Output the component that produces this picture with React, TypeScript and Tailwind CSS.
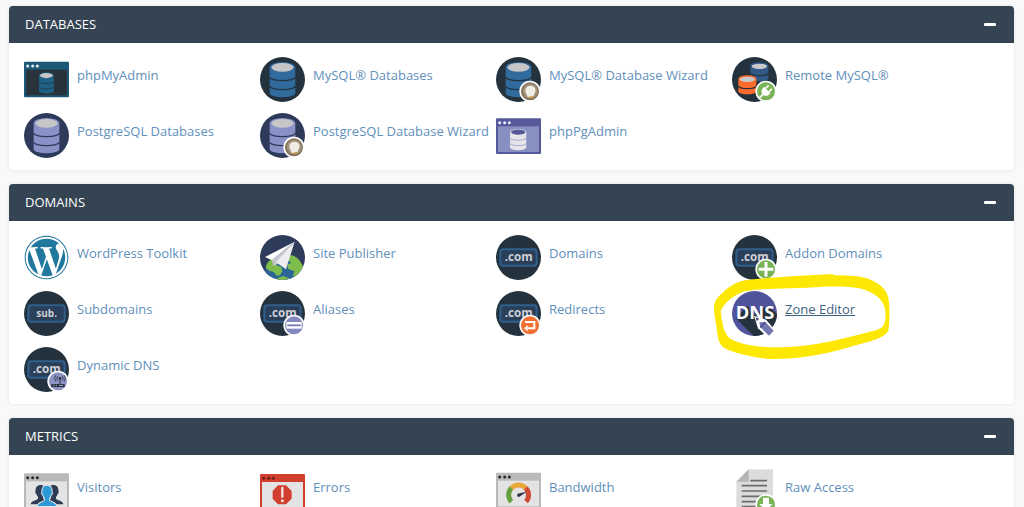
import React, { useState } from 'react';
import { FaWordpress } from 'react-icons/fa';

const NAVY = '#24323e';

// All icons share a 135 x 135 drawing area.
const Icon: React.FC<{ children: React.ReactNode }> = ({ children }) => (
  <svg viewBox="0 0 135 135" className="h-[45px] w-[45px] shrink-0" aria-hidden="true">
    {children}
  </svg>
);

const Disc: React.FC<{ fill?: string }> = ({ fill = NAVY }) => (
  <circle cx="67.5" cy="67.5" r="67.5" fill={fill} />
);

type CylinderProps = { fill: string; line: string; top?: string; transform?: string };

const Cylinder: React.FC<CylinderProps> = ({ fill, line, top = '#c6c6c9', transform }) => (
  <g transform={transform}>
    <path d="M29 31a38.5 16 0 0 1 77 0V108a38.5 13 0 0 1-77 0z" fill={fill} />
    <ellipse cx="67.5" cy="31" rx="33" ry="13" fill={top} />
    <path d="M29 60a38.5 11 0 0 0 77 0M29 87a38.5 11 0 0 0 77 0" fill="none" stroke={line} strokeWidth="3.5" />
  </g>
);

const ShortCylinder: React.FC<CylinderProps> = ({ fill, line, transform }) => (
  <g transform={transform}>
    <path d="M0 10a27 10 0 0 1 54 0V48a27 9 0 0 1-54 0z" fill={fill} />
    <ellipse cx="27" cy="12" rx="23" ry="8" fill="#c9c9cc" />
    <path d="M0 31a27 9 0 0 0 54 0" fill="none" stroke={line} strokeWidth="3.5" />
  </g>
);

const Badge: React.FC<{ fill: string; children: React.ReactNode; cy?: number }> = ({ fill, children, cy = 103 }) => (
  <g transform={`translate(102 ${cy})`}>
    <circle r="32" fill="#fff" />
    <circle r="27" fill={fill} />
    {children}
  </g>
);

const Wand = () => (
  <Badge fill="#857459">
    <circle cx="1" cy="-1" r="22" fill="#a3957d" />
    <path d="M-12 -10C-5 -20 12 -19 16 -7C19 2 11 9 11 14L-7 17C-8 9-18 1-12-10z" fill="#efede6" />
    <path d="M-4 19l14-3" stroke="#d6a64a" strokeWidth="4" />
  </Badge>
);

const Window: React.FC<{ frame: string; inner: string; dot: string; y?: number }> = ({ frame, inner, dot, y = 14 }) => (
  <g transform={`translate(0 ${y})`}>
    <rect width="135" height="107" rx="3" fill={frame} />
    <rect x="6" y="24" width="123" height="77" fill={inner} />
    <circle cx="11" cy="13" r="4.5" fill={dot} />
    <circle cx="26" cy="13" r="4.5" fill={dot} />
    <circle cx="40" cy="13" r="4.5" fill={dot} />
  </g>
);

const DomainPlate: React.FC<{ text: string; size: number }> = ({ text, size }) => (
  <>
    <Disc />
    <rect x="13" y="43" width="109" height="49" rx="8" fill="#2a3f5a" stroke="#315f8b" strokeWidth="6" />
    <text
      x="68"
      y="79"
      textAnchor="middle"
      fontFamily="'Open Sans', sans-serif"
      fontWeight="700"
      fontSize={size}
      fill="#cfd0d6"
    >
      {text}
    </text>
  </>
);

const Person: React.FC<{ fill: string; transform: string }> = ({ fill, transform }) => (
  <path
    transform={transform}
    fill={fill}
    d="M0-24c10 0 16 7 15 17 2 1 2 8-2 9-1 5-4 8-5 10v5c3 5 20 5 22 17H-30c2-12 19-12 22-17v-5c-1-2-4-5-5-10-4-1-4-8-2-9-1-10 5-17 15-17z"
  />
);

const PhpMyAdmin = () => (
  <Icon>
    <Window frame="#1c5877" inner="#28333c" dot="#e6eef2" />
    <Cylinder fill="#1d6285" line="#28333c" transform="translate(28 37) scale(.58 .6)" />
  </Icon>
);

const MySql = () => (
  <Icon>
    <Disc />
    <Cylinder fill="#316a9d" line={NAVY} />
  </Icon>
);

const MySqlWizard = () => (
  <Icon>
    <Disc />
    <Cylinder fill="#316a9d" line={NAVY} />
    <Wand />
  </Icon>
);

const RemoteMySql = () => (
  <Icon>
    <Disc />
    <ShortCylinder fill="#315a88" line={NAVY} transform="translate(55 16)" />
    <ShortCylinder fill="#fb6b2b" line={NAVY} transform="translate(19 55)" />
    <Badge fill="#7ab355">
      <g transform="rotate(45)" fill="#fff" stroke="#fff">
        <path d="M-13-5h26v5a13 13 0 0 1-26 0z" />
        <path d="M-7-5v-13M7-5v-13M0 10v17" strokeWidth="5" fill="none" />
      </g>
    </Badge>
  </Icon>
);

const Postgres = () => (
  <Icon>
    <Disc fill="#2d3a5a" />
    <Cylinder fill="#8a91c7" line="#2d3a5a" />
  </Icon>
);

const PostgresWizard = () => (
  <Icon>
    <Disc fill="#2d3a5a" />
    <Cylinder fill="#8a91c7" line="#2d3a5a" />
    <Wand />
  </Icon>
);

const PhpPgAdmin = () => (
  <Icon>
    <Window frame="#555899" inner="#8890c2" dot="#eef" y={16} />
    <Cylinder fill="#e6e6ea" line="#8890c2" top="#555899" transform="translate(24 39) scale(.63 .6)" />
  </Icon>
);

const WordPress = () => <FaWordpress className="h-[45px] w-[45px] shrink-0 text-[#21789f]" aria-hidden="true" />;

const SitePublisher = () => (
  <Icon>
    <defs>
      <clipPath id="publisher-disc">
        <circle cx="67.5" cy="67.5" r="67.5" />
      </clipPath>
    </defs>
    <Disc fill="#2e3b5b" />
    <g clipPath="url(#publisher-disc)">
      <circle cx="71" cy="114" r="56" fill="#2c6699" />
      <path d="M17 98C20 84 27 76 37 72L50 91 64 96 67 109 60 121 50 122 41 111 28 107z" fill="#7ebd4b" />
      <path d="M80 72L94 60C116 66 127 85 132 105L120 119 109 132 99 121 103 109 84 101 82 89 94 83z" fill="#7ebd4b" />
      <path d="M51 130l19-7 19 8-10 6H57z" fill="#7ebd4b" />
    </g>
    <path d="M104 20L15 66 36 76z" fill="#fff" />
    <path d="M104 20L36 76 40 93 54 86z" fill="#c6c6ce" />
    <path d="M104 20L48 82 78 103z" fill="#ededf1" />
  </Icon>
);

const Domains = () => (
  <Icon>
    <DomainPlate text=".com" size={35} />
  </Icon>
);

const AddonDomains = () => (
  <Icon>
    <DomainPlate text=".com" size={35} />
    <Badge fill="#7ab355">
      <path d="M0-22v44M-22 0h44" stroke="#fff" strokeWidth="9" />
    </Badge>
  </Icon>
);

const Subdomains = () => (
  <Icon>
    <DomainPlate text="sub." size={30} />
  </Icon>
);

const Aliases = () => (
  <Icon>
    <DomainPlate text=".com" size={35} />
    <Badge fill="#8389bd">
      <path d="M-23-10h46v20h-46z" fill="#fff" />
      <path d="M-20 0h40" stroke="#6f75aa" strokeWidth="5" />
    </Badge>
  </Icon>
);

const Redirects = () => (
  <Icon>
    <DomainPlate text=".com" size={35} />
    <Badge fill="#f27034">
      <path d="M-15-10h28v19H-7" fill="none" stroke="#fff" strokeWidth="6" />
      <path d="M-18 9l11-9v18z" fill="#fff" />
    </Badge>
  </Icon>
);

const ZoneEditor = () => (
  <Icon>
    <defs>
      <clipPath id="zone-disc">
        <circle cx="67.5" cy="67.5" r="67.5" />
      </clipPath>
    </defs>
    <Disc fill="#50549a" />
    <path d="M12 82L48 44 60 74 108 44 135 70V135H65z" fill={NAVY} clipPath="url(#zone-disc)" />
    <text
      x="69"
      y="83"
      textAnchor="middle"
      fontFamily="'Open Sans', sans-serif"
      fontWeight="700"
      fontSize="55"
      fill="#fff"
    >
      DNS
    </text>
    <path d="M66 74l36 12 27 31-16 19h-9L78 112z" fill="#fff" />
    <path d="M82 94l18-1 25 26-14 15-26-25z" fill="#7277b0" />
    <path d="M85 109l15-16" stroke="#434783" strokeWidth="4" />
    <path d="M71 79l11 4-8 8z" fill="#43476e" />
  </Icon>
);

const DynamicDns = () => (
  <Icon>
    <DomainPlate text=".com" size={35} />
    <Badge fill="#8d93c5">
      <path d="M-20 8h40v9h-40z" fill={NAVY} />
      <path d="M6-7V8" stroke={NAVY} strokeWidth="3" />
      <circle cx="6" cy="-9" r="4" fill={NAVY} />
      <path d="M-1-16q-5 7 0 14M13-16q5 7 0 14M-7-18q-6 9 0 18M19-18q6 9 0 18" fill="none" stroke={NAVY} strokeWidth="2.5" />
      <path d="M-15 12h4M-7 12h4M3 12h12" stroke="#a9aed8" strokeWidth="3" />
    </Badge>
  </Icon>
);

const Visitors = () => (
  <Icon>
    <Window frame="#b9b9b9" inner="#e3e3e3" dot="#2b2b2b" y={13} />
    <Person fill="#2e3b57" transform="translate(50 72)" />
    <Person fill="#2e3b57" transform="translate(88 72)" />
    <g stroke="#e3e3e3" strokeWidth="3">
      <Person fill="#2b9ad6" transform="translate(69 75) scale(1 1.1)" />
    </g>
  </Icon>
);

const Errors = () => (
  <Icon>
    <Window frame="#d1402f" inner="#e3e3e3" dot="#6d2119" y={15} />
    <path d="M54 49h24l17 17v23l-17 17H54L38 89V66z" fill="#d1402f" />
    <path d="M67 57v26" stroke="#f2e4e2" strokeWidth="7" strokeLinecap="round" />
    <circle cx="67" cy="95" r="4.5" fill="#f2e4e2" />
  </Icon>
);

const Bandwidth = () => (
  <Icon>
    <Window frame="#b9b9b9" inner="#e3e3e3" dot="#2b2b2b" y={11} />
    <path d="M46 98A30 30 0 0 1 46 57" fill="none" stroke="#669f3d" strokeWidth="15" />
    <path d="M46 57A30 30 0 0 1 89 57" fill="none" stroke="#eaa537" strokeWidth="15" />
    <path d="M89 57A30 30 0 0 1 90 98" fill="none" stroke="#d04b35" strokeWidth="15" />
    <path d="M92 68L69 84a6 6 0 0 1-4-10z" fill="#2b3440" />
  </Icon>
);

const RawAccess = () => (
  <Icon>
    <path d="M50 1h73v134H13V38z" fill="#dcdcdc" />
    <path d="M50 1v37H13z" fill="#b5b5b5" />
    <path d="M55 35h50M29 50h76M29 66h76M29 82h76M29 98h76M29 113h76" stroke="#6b6b6b" strokeWidth="5" />
    <Badge fill="#7ab355" cy={107}>
      <path d="M-9-21H9V-2h11L0 19-20-2h11z" fill="#fff" />
    </Badge>
  </Icon>
);

// Hand-drawn marker loop around the highlighted link.
const MarkerLoop = () => (
  <svg
    viewBox="0 0 600 420"
    className="pointer-events-none absolute -top-[66px] -left-[27px] h-[140px] w-[200px]"
    aria-hidden="true"
  >
    <path
      fill="#fde803"
      fillRule="evenodd"
      d="M27 255C26 232 34 219 52 204C72 185 94 171 120 166C190 157 290 152 384 147L385 151C440 151 472 153 498 165C530 178 550 199 552 232C554 260 554 291 550 318C535 341 492 350 455 360C390 381 300 401 215 402C160 402 105 389 65 373C46 364 40 350 37 325C35 299 28 280 27 255ZM47 257C60 232 85 211 118 199C175 188 263 192 355 185C410 184 455 183 490 199C520 212 538 232 541 258C543 280 540 298 532 306C515 319 470 325 430 337C370 352 300 366 225 367C160 367 110 360 76 341C58 327 51 298 47 257Z"
    />
  </svg>
);

type Item = { label: string; icon: React.FC; highlighted?: boolean };

const sections: { title: string; items: Item[] }[] = [
  {
    title: 'Databases',
    items: [
      { label: 'phpMyAdmin', icon: PhpMyAdmin },
      { label: 'MySQL® Databases', icon: MySql },
      { label: 'MySQL® Database Wizard', icon: MySqlWizard },
      { label: 'Remote MySQL®', icon: RemoteMySql },
      { label: 'PostgreSQL Databases', icon: Postgres },
      { label: 'PostgreSQL Database Wizard', icon: PostgresWizard },
      { label: 'phpPgAdmin', icon: PhpPgAdmin },
    ],
  },
  {
    title: 'Domains',
    items: [
      { label: 'WordPress Toolkit', icon: WordPress },
      { label: 'Site Publisher', icon: SitePublisher },
      { label: 'Domains', icon: Domains },
      { label: 'Addon Domains', icon: AddonDomains },
      { label: 'Subdomains', icon: Subdomains },
      { label: 'Aliases', icon: Aliases },
      { label: 'Redirects', icon: Redirects },
      { label: 'Zone Editor', icon: ZoneEditor, highlighted: true },
      { label: 'Dynamic DNS', icon: DynamicDns },
    ],
  },
  {
    title: 'Metrics',
    items: [
      { label: 'Visitors', icon: Visitors },
      { label: 'Errors', icon: Errors },
      { label: 'Bandwidth', icon: Bandwidth },
      { label: 'Raw Access', icon: RawAccess },
    ],
  },
];

const Panel: React.FC<{ title: string; items: Item[] }> = ({ title, items }) => {
  const [open, setOpen] = useState(true);

  return (
    <section className="rounded bg-white shadow-[0_0_2px_1px_#ececec]">
      <header className="flex h-[37px] items-center justify-between rounded-t bg-[#354453] pr-3 pl-4">
        <h2 className="text-[13px] text-white uppercase">{title}</h2>
        <button
          type="button"
          aria-label={`Toggle ${title}`}
          aria-expanded={open}
          onClick={() => setOpen(!open)}
          className="flex h-6 w-6 items-center justify-center"
        >
          <span className="h-[3px] w-3 rounded-[1px] bg-white" />
        </button>
      </header>
      {open && (
        <ul className="grid grid-cols-4 gap-y-[11px] pt-3.5 pr-[46px] pb-3 pl-[15px]">
          {items.map(({ label, icon: ItemIcon, highlighted }) => (
            <li key={label} className="relative">
              <a href="#" className="flex gap-2 text-[#5f8fbb]">
                <ItemIcon />
                <span
                  className={
                    highlighted
                      ? 'pt-2 text-[13px] leading-5 whitespace-nowrap text-[#3f6482] underline'
                      : 'pt-2 text-[13px] leading-5 whitespace-nowrap'
                  }
                >
                  {label}
                </span>
              </a>
              {highlighted && <MarkerLoop />}
            </li>
          ))}
        </ul>
      )}
    </section>
  );
};

const App: React.FC = () => {
  return (
    <main className="flex min-h-screen flex-col gap-3.5 bg-[#f9f9fa] pt-1.5 pr-2.5 pl-[9px] font-['Open_Sans',sans-serif]">
      {sections.map((section) => (
        <Panel key={section.title} title={section.title} items={section.items} />
      ))}
    </main>
  );
};

export default App;
